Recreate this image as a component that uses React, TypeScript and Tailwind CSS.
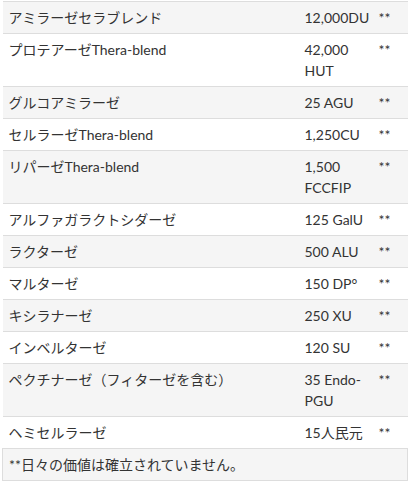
const rows: [string, string][] = [
  ['アミラーゼセラブレンド', '12,000DU'],
  ['プロテアーゼThera-blend', '42,000 HUT'],
  ['グルコアミラーゼ', '25 AGU'],
  ['セルラーゼThera-blend', '1,250CU'],
  ['リパーゼThera-blend', '1,500 FCCFIP'],
  ['アルファガラクトシダーゼ', '125 GalU'],
  ['ラクターゼ', '500 ALU'],
  ['マルターゼ', '150 DP°'],
  ['キシラナーゼ', '250 XU'],
  ['インベルターゼ', '120 SU'],
  ['ペクチナーゼ（フィターゼを含む）', '35 Endo-PGU'],
  ['ヘミセルラーゼ', '15人民元'],
];

export default function App() {
  return (
    <div
      className="bg-white pl-[2px] pt-[1px] w-[411px] h-[484px] text-[#333] text-[14px] leading-[21px]"
      style={{ fontFamily: 'Lato, "Noto Sans CJK JP", sans-serif' }}
    >
      <table className="w-[405px] border-collapse table-fixed">
        <colgroup>
          <col className="w-[296px]" />
          <col className="w-[74px]" />
          <col className="w-[35px]" />
        </colgroup>
        <tbody>
          {rows.map(([name, amount], i) => (
            <tr key={name} className={i % 2 === 0 ? 'bg-[#f5f5f5]' : 'bg-white'}>
              <td className="border-y border-[#dddddd] px-[6px] py-[5px] align-top">{name}</td>
              <td className="border-y border-[#dddddd] px-[6px] py-[5px] align-top">{amount}</td>
              <td className="border-y border-[#dddddd] px-[6px] py-[5px] align-top">**</td>
            </tr>
          ))}
          <tr className="bg-[#f5f5f5]">
            <td colSpan={3} className="border border-[#dddddd] px-[6px] py-[5px]">
              **日々の価値は確立されていません。
            </td>
          </tr>
        </tbody>
      </table>
    </div>
  );
}
